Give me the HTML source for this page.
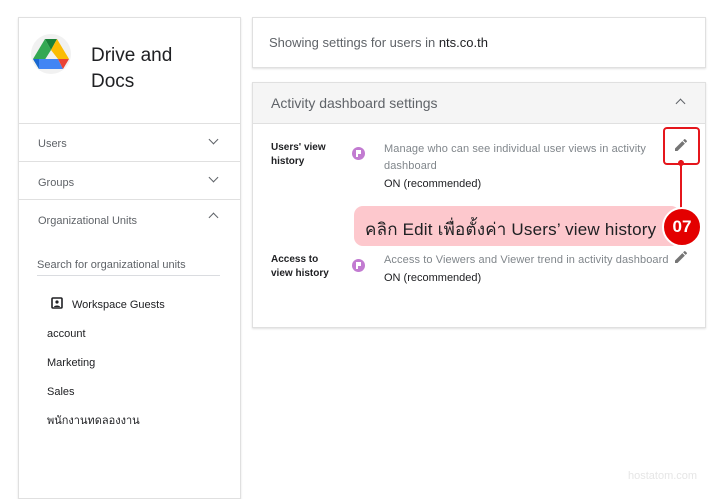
<!DOCTYPE html><html><head><style>
body{margin:0;width:720px;height:486px;background:#fff;font-family:"Liberation Sans","Noto Sans CJK SC",sans-serif;position:relative;overflow:hidden;color:#202124}
.a{position:absolute}
.card{position:absolute;border:1px solid #e0e0e0;background:#fff;box-shadow:0 1px 2px rgba(0,0,0,.12)}
.s{font-size:11px;color:#5f6368}
.chev{position:absolute;width:6px;height:6px;border-right:1.6px solid #5f6368;border-bottom:1.6px solid #5f6368}
</style></head><body>
<div class="card" style="left:18px;top:17px;width:221px;height:480px"></div>
<svg class="a" style="left:30px;top:33px" width="42" height="42" viewBox="0 0 42 42"><circle cx="21" cy="21" r="20" fill="#f1f1f1"/><polygon points="15,6 27,6 21,17" fill="#188038"/><polygon points="15,6 3,26 9,36 21,17" fill="#34a853"/><polygon points="27,6 39,26 28,26 21,17" fill="#fbbc04"/><polygon points="9,26 28,26 33,36 9,36" fill="#4285f4"/><polygon points="3,26 9,26 9,36" fill="#1967d2"/><polygon points="28,26 39,26 33,36" fill="#ea4335"/></svg>
<div class="a" style="left:91px;top:43px;font-size:19px;line-height:26px;color:#202124">Drive and<br>Docs</div>
<div class="a" style="left:18px;top:123px;width:222px;border-top:1px solid #e0e0e0"></div>
<div class="a s" style="left:38px;top:138px">Users</div><div class="chev" style="left:210px;top:136px;transform:rotate(45deg)"></div>
<div class="a" style="left:18px;top:161px;width:222px;border-top:1px solid #e0e0e0"></div>
<div class="a s" style="left:38px;top:177px">Groups</div><div class="chev" style="left:210px;top:174px;transform:rotate(45deg)"></div>
<div class="a" style="left:18px;top:199px;width:222px;border-top:1px solid #e0e0e0"></div>
<div class="a s" style="left:38px;top:215px">Organizational Units</div><div class="chev" style="left:210px;top:214px;transform:rotate(-135deg)"></div>
<div class="a s" style="left:37px;top:259px">Search for organizational units</div>
<div class="a" style="left:37px;top:275px;width:183px;border-top:1px solid #dadce0"></div>
<svg class="a" style="left:51px;top:297px" width="12" height="12" viewBox="0 0 12 12"><rect x="1" y="1" width="10" height="10" rx="1" fill="none" stroke="#202124" stroke-width="1.6"/><circle cx="6" cy="5" r="1.6" fill="#202124"/><path d="M3 10c0-2 6-2 6 0" fill="#202124"/></svg>
<div class="a" style="left:72px;top:299px;font-size:11px">Workspace Guests</div>
<div class="a" style="left:47px;top:328px;font-size:11px">account</div>
<div class="a" style="left:47px;top:357px;font-size:11px">Marketing</div>
<div class="a" style="left:47px;top:386px;font-size:11px">Sales</div>
<div class="a" style="left:47px;top:411px;font-size:11px">พนักงานทดลองงาน</div>

<div class="card" style="left:252px;top:17px;width:452px;height:49px"></div>
<div class="a" style="left:269px;top:35px;font-size:13px;color:#5f6368">Showing settings for users in <span style="color:#202124">nts.co.th</span></div>
<div class="card" style="left:252px;top:82px;width:452px;height:244px"></div>
<div class="a" style="left:253px;top:83px;width:452px;height:40px;background:#f5f5f5;border-bottom:1px solid #e0e0e0"></div>
<div class="a" style="left:271px;top:95px;font-size:14px;color:#5f6368">Activity dashboard settings</div>
<div class="chev" style="left:677px;top:100px;transform:rotate(-135deg)"></div>

<div class="a" style="left:271px;top:141px;font-size:10px;font-weight:bold;line-height:14px">Users' view<br>history</div>
<div class="a" style="left:352px;top:147px;width:13px;height:13px;border-radius:50%;background:#c27bd1"><div class="a" style="left:4px;top:3px;width:5px;height:4px;background:#fff"></div><div class="a" style="left:4px;top:3px;width:1.5px;height:7px;background:#fff"></div></div>
<div class="a" style="left:384px;top:141px;font-size:11px;line-height:17px;color:#80868b;letter-spacing:.1px">Manage who can see individual user views in activity<br>dashboard</div>
<div class="a" style="left:384px;top:178px;font-size:11px">ON (recommended)</div>
<svg class="a" style="left:673px;top:137px" width="16" height="16" viewBox="0 0 24 24"><path d="M3 17.25V21h3.75L17.81 9.94l-3.75-3.75L3 17.25zM20.71 7.04a1 1 0 000-1.41l-2.34-2.34a1 1 0 00-1.41 0l-1.83 1.83 3.75 3.75 1.83-1.83z" fill="#757575"/></svg>
<div class="a" style="left:663px;top:127px;width:33px;height:34px;border:2px solid #e5161c;border-radius:4px"></div>
<div class="a" style="left:680px;top:160px;width:2px;height:50px;background:#e5161c"></div>
<div class="a" style="left:678px;top:160px;width:6px;height:6px;border-radius:50%;background:#e5161c"></div>

<div class="a" style="left:271px;top:253px;font-size:10px;font-weight:bold;line-height:14px">Access to<br>view history</div>
<div class="a" style="left:352px;top:259px;width:13px;height:13px;border-radius:50%;background:#c27bd1"><div class="a" style="left:4px;top:3px;width:5px;height:4px;background:#fff"></div><div class="a" style="left:4px;top:3px;width:1.5px;height:7px;background:#fff"></div></div>
<div class="a" style="left:384px;top:254px;font-size:11px;color:#80868b;letter-spacing:.1px">Access to Viewers and Viewer trend in activity dashboard</div>
<div class="a" style="left:384px;top:272px;font-size:11px">ON (recommended)</div>
<svg class="a" style="left:673px;top:249px" width="16" height="16" viewBox="0 0 24 24"><path d="M3 17.25V21h3.75L17.81 9.94l-3.75-3.75L3 17.25zM20.71 7.04a1 1 0 000-1.41l-2.34-2.34a1 1 0 00-1.41 0l-1.83 1.83 3.75 3.75 1.83-1.83z" fill="#757575"/></svg>

<div class="a" style="left:354px;top:206px;width:326px;height:40px;background:#fdc8cd;border-radius:9px"></div>
<div class="a" style="left:365px;top:216px;font-size:17px;white-space:nowrap;letter-spacing:.2px">คลิก Edit เพื่อตั้งค่า Users’ view history</div>
<div class="a" style="left:662px;top:207px;width:36px;height:36px;border-radius:50%;background:#e30000;border:2px solid #fff;color:#fff;font-weight:bold;font-size:17px;line-height:36px;text-align:center">07</div>
<div class="a" style="left:628px;top:470px;font-size:11px;color:#e6e6e6">hostatom.com</div>
</body></html>
